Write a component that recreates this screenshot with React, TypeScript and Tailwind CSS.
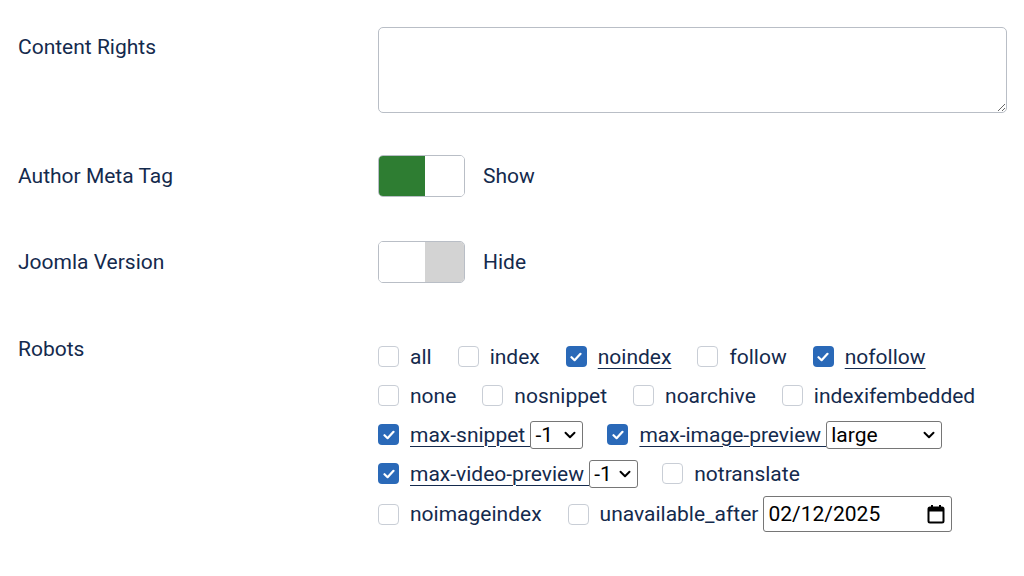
import { ChevronDown } from "lucide-react";

type Item = {
  label: string;
  checked?: boolean;
  select?: { value: string; width: string };
  date?: string;
};

const ROWS: { items: Item[]; h: string }[] = [
  {
    h: "h-[39px]",
    items: [
      { label: "all" },
      { label: "index" },
      { label: "noindex", checked: true },
      { label: "follow" },
      { label: "nofollow", checked: true },
    ],
  },
  {
    h: "h-[39px]",
    items: [
      { label: "none" },
      { label: "nosnippet" },
      { label: "noarchive" },
      { label: "indexifembedded" },
    ],
  },
  {
    h: "h-[39px]",
    items: [
      { label: "max-snippet", checked: true, select: { value: "-1", width: "w-[53px]" } },
      { label: "max-image-preview", checked: true, select: { value: "large", width: "w-[116px]" } },
    ],
  },
  {
    h: "h-[39px]",
    items: [
      { label: "max-video-preview", checked: true, select: { value: "-1", width: "w-[49px]" } },
      { label: "notranslate" },
    ],
  },
  {
    h: "h-[42px]",
    items: [
      { label: "noimageindex" },
      { label: "unavailable_after", date: "02/12/2025" },
    ],
  },
];

function Checkbox({ checked }: { checked?: boolean }) {
  if (checked) {
    return (
      <span className="flex h-[21px] w-[21px] shrink-0 items-center justify-center rounded-[4px] bg-[#2a69b8]">
        <svg width="12" height="10" viewBox="0 0 12 10" fill="none">
          <path d="M1.5 5.2 4.6 8.2 10.5 1.8" stroke="white" strokeWidth="2.2" strokeLinecap="round" strokeLinejoin="round" />
        </svg>
      </span>
    );
  }
  return <span className="h-[21px] w-[21px] shrink-0 rounded-[4px] border border-[#c9ced6] bg-white" />;
}

function Robot({ item }: { item: Item }) {
  return (
    <div className={`flex items-center ${item.select ? "mr-[24px]" : "mr-[26px]"}`}>
      <Checkbox checked={item.checked} />
      <span
        className={`ml-[11px] whitespace-pre ${item.checked ? "underline decoration-1 underline-offset-[4px]" : ""}`}
      >
        {item.checked && item.select ? item.label + " " : item.label}
      </span>
      {item.select && (
        <span
          className={`flex h-[28px] ${item.select.width} items-center justify-between rounded-[3px] border border-[#767676] bg-white pl-[4px] pr-[3px] text-black`}
        >
          {item.select.value}
          <ChevronDown className="h-[18px] w-[18px]" strokeWidth={2.6} />
        </span>
      )}
      {item.date && (
        <span className="ml-[5px] flex h-[36px] w-[189px] items-center justify-between rounded-[3px] border border-[#767676] bg-white pl-[4px] pr-[6px] text-black">
          {item.date}
          <svg width="18" height="20" viewBox="0 0 18 20" fill="none">
            <rect x="1.5" y="3.5" width="15" height="15" rx="1.5" stroke="black" strokeWidth="2" />
            <rect x="1.5" y="3.5" width="15" height="4" fill="black" />
            <path d="M5 1v4M13 1v4" stroke="black" strokeWidth="2" />
          </svg>
        </span>
      )}
    </div>
  );
}

function Toggle({ on }: { on: boolean }) {
  return (
    <div className="flex h-[42px] w-[87px] overflow-hidden rounded-[5px] border border-[#b9bec6] bg-white">
      <span className={`w-[46px] ${on ? "bg-[#2e7d32]" : "bg-white"}`} />
      <span className={`flex-1 ${on ? "bg-white" : "bg-[#d3d3d3]"}`} />
    </div>
  );
}

export default function App() {
  return (
    <div
      className="min-h-[576px] bg-white pl-[18px] pt-[27px] text-[21px] leading-[24px] text-[#142a4d]"
      style={{ fontFamily: "Roboto, 'Noto Sans', sans-serif" }}
    >
      <div className="flex">
        <label className="w-[360px] shrink-0 pt-[8px]">Content Rights</label>
        <textarea className="h-[86px] w-[629px] rounded-[5px] border border-[#b9bec6] bg-white" />
      </div>

      <div className="mt-[42px] flex items-center">
        <label className="w-[360px] shrink-0 pb-[1px]">Author Meta Tag</label>
        <Toggle on />
        <span className="ml-[18px] pb-[1px]">Show</span>
      </div>

      <div className="mt-[44px] flex items-center">
        <label className="w-[360px] shrink-0 pb-[1px]">Joomla Version</label>
        <Toggle on={false} />
        <span className="ml-[18px] pb-[1px]">Hide</span>
      </div>

      <div className="mt-[54px] flex">
        <label className="w-[360px] shrink-0">Robots</label>
        <div className="flex flex-col">
          {ROWS.map((row, i) => (
            <div key={i} className={`flex ${row.h} items-center`}>
              {row.items.map((item) => (
                <Robot key={item.label} item={item} />
              ))}
            </div>
          ))}
        </div>
      </div>
    </div>
  );
}
